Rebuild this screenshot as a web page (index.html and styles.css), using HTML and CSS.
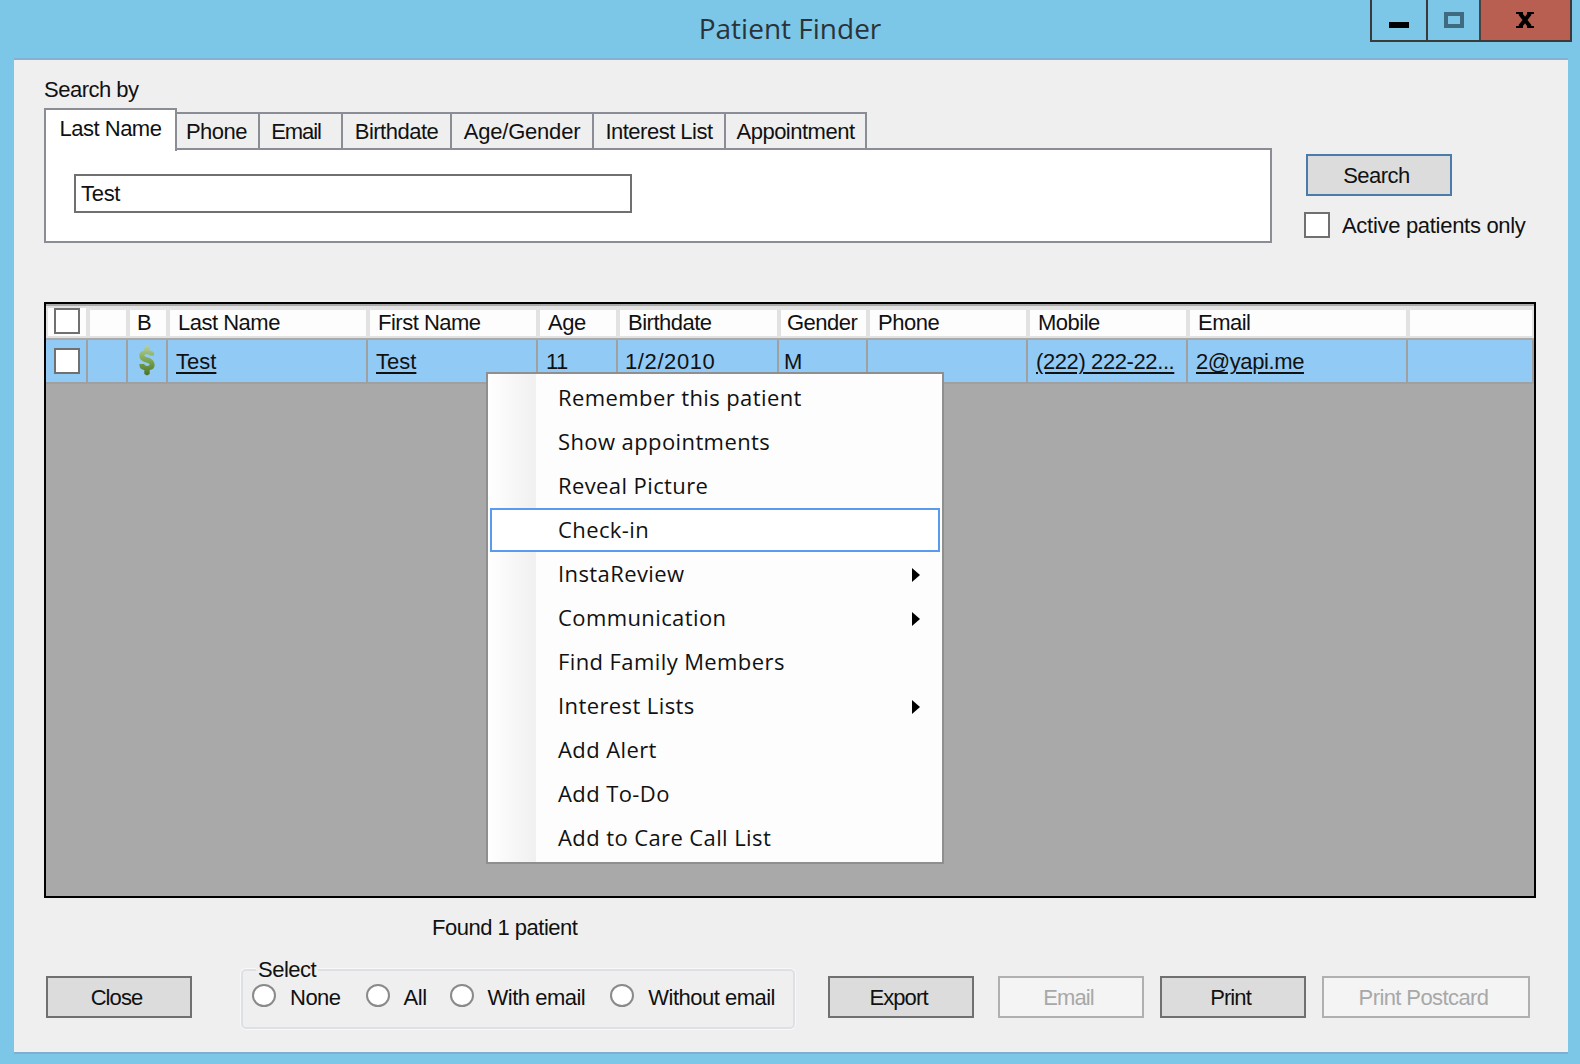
FILE: index.html
```html
<!DOCTYPE html>
<html lang="en">
<head>
    <meta charset="UTF-8">
    <title>Patient Finder</title>
    <link rel="stylesheet" href="styles.css">
</head>
<body>
    <div class="titlebar">
        <div></div>
        <div class="title">Patient Finder</div>
        <div class="controls">
            <div class="ctl ctl-min"><span class="min-bar"></span></div>
            <div class="ctl ctl-max"><span class="max-box"></span></div>
            <div class="ctl ctl-close">
                <svg width="18" height="16" viewBox="0 0 18 16">
                    <path d="M4 1.5 L14 14.5 M14 1.5 L4 14.5" stroke="#000" stroke-width="4" fill="none"/>
                    <path d="M0 0h7v2H0z M11 0h7v2h-7z M0 14h7v2H0z M11 14h7v2h-7z" fill="#000"/>
                </svg>
            </div>
        </div>
    </div>

    <div class="client">
        <div class="search-row">
            <div class="search-by">
                <div class="search-label">Search by</div>
                <div class="tabs">
                    <div class="tab active tab-last">Last Name</div>
                    <div class="tab tab-phone">Phone</div>
                    <div class="tab tab-email">Email</div>
                    <div class="tab tab-birth">Birthdate</div>
                    <div class="tab tab-age">Age/Gender</div>
                    <div class="tab tab-interest">Interest List</div>
                    <div class="tab tab-appt">Appointment</div>
                </div>
                <div class="tab-pane">
                    <div class="text-input">Test</div>
                </div>
            </div>
            <div class="search-side">
                <button class="btn btn-search">Search</button>
                <div class="active-only">
                    <span class="check"></span>
                    <span class="active-text">Active patients only</span>
                </div>
            </div>
        </div>

        <div class="grid">
            <div class="grid-cols grid-head">
                <div class="hcell"><span class="check"></span></div>
                <div class="hcell"></div>
                <div class="hcell hcell-b">B</div>
                <div class="hcell">Last Name</div>
                <div class="hcell">First Name</div>
                <div class="hcell">Age</div>
                <div class="hcell">Birthdate</div>
                <div class="hcell hcell-gender">Gender</div>
                <div class="hcell">Phone</div>
                <div class="hcell">Mobile</div>
                <div class="hcell">Email</div>
                <div class="hcell"></div>
            </div>
            <div class="grid-cols grid-row">
                <div class="cell"><span class="check"></span></div>
                <div class="cell"></div>
                <div class="cell cell-icon">
                    <svg width="18" height="32" viewBox="0 0 20 32" preserveAspectRatio="none">
                        <defs>
                            <linearGradient id="dollar" x1="0" y1="0" x2="0" y2="1">
                                <stop offset="0" stop-color="#b9d3a3"/>
                                <stop offset="0.5" stop-color="#7fa650"/>
                                <stop offset="1" stop-color="#4a7224"/>
                            </linearGradient>
                        </defs>
                        <path d="M10 0.5 L13 3.5 V6.5 C17 7 18 8.5 18 11.5 H13 C13 10 7 9.5 7 11.5 C7 13.5 18.5 13 18.5 21 C18.5 24 16.500 25.500 13 26 V30 L10 31.500 L7 30 V26 C3 25.500 1.500 23.500 1.500 20 H7 C7 22.500 13 22.500 13 20.500 C13 18 1.500 19 1.500 11.500 C1.500 8.500 3.500 7 7 6.500 V3.500 Z" fill="url(#dollar)"/>
                    </svg>
                </div>
                <div class="cell"><a class="link link-name">Test</a></div>
                <div class="cell"><a class="link link-name">Test</a></div>
                <div class="cell">11</div>
                <div class="cell cell-date">1/2/2010</div>
                <div class="cell cell-gender">M</div>
                <div class="cell"></div>
                <div class="cell"><a class="link">(222) 222-22...</a></div>
                <div class="cell"><a class="link">2@yapi.me</a></div>
                <div class="cell"></div>
            </div>

            <div class="menu">
                <div class="menu-item">Remember this patient</div>
                <div class="menu-item">Show appointments</div>
                <div class="menu-item">Reveal Picture</div>
                <div class="menu-item selected">Check-in</div>
                <div class="menu-item">InstaReview<span class="arrow"></span></div>
                <div class="menu-item">Communication<span class="arrow"></span></div>
                <div class="menu-item">Find Family Members</div>
                <div class="menu-item">Interest Lists<span class="arrow"></span></div>
                <div class="menu-item">Add Alert</div>
                <div class="menu-item">Add To-Do</div>
                <div class="menu-item">Add to Care Call List</div>
            </div>
        </div>

        <div class="found">Found 1 patient</div>

        <div class="bottom-bar">
            <button class="btn btn-close">Close</button>
            <div class="select-group">
                <span class="select-legend">Select</span>
                <div class="radio-opt opt-none"><span class="radio"></span>None</div>
                <div class="radio-opt opt-all"><span class="radio"></span>All</div>
                <div class="radio-opt opt-with"><span class="radio"></span>With email</div>
                <div class="radio-opt"><span class="radio"></span>Without email</div>
            </div>
            <button class="btn btn-export">Export</button>
            <button class="btn btn-email" disabled>Email</button>
            <button class="btn btn-print">Print</button>
            <button class="btn btn-postcard" disabled>Print Postcard</button>
        </div>
    </div>
</body>
</html>
```

FILE: styles.css
```css
* {
    box-sizing: border-box;
}
body {
    margin: 0;
    height: 1064px;
    background: #7cc7e8;
    font-family: "Liberation Sans", Arial, sans-serif;
    font-size: 22px;
    letter-spacing: -0.5px;
    color: #111;
    overflow: hidden;
}

/* title bar */
.titlebar {
    height: 58px;
    display: grid;
    grid-template-columns: 1fr auto 1fr;
}
.title {
    font-family: "Open Sans", sans-serif;
    font-size: 28px;
    line-height: 56px;
    letter-spacing: 0;
    color: #2b3338;
}
.controls {
    justify-self: end;
    display: flex;
    height: 42px;
    margin-right: 8px;
    border: 2px solid #3a3a3a;
    border-top: none;
}
.ctl {
    display: flex;
    align-items: center;
    justify-content: center;
}
.ctl-min {
    width: 56px;
    border-right: 2px solid #3a3a3a;
    padding-top: 10px;
}
.min-bar {
    width: 20px;
    height: 6px;
    background: #000;
}
.ctl-max {
    width: 51px;
}
.max-box {
    width: 20px;
    height: 16px;
    border: 4px solid #3f6a80;
}
.ctl-close {
    width: 91px;
    padding-right: 2px;
    background: #b85f52;
    border-left: 2px solid #4f4040;
}

/* main window area */
.client {
    height: 996px;
    margin: 0 12px 0 14px;
    padding: 17px 30px 0;
    background: #efefef;
    border-top: 2px solid #86b0d0;
    border-bottom: 2px solid #7db0cf;
}
.search-row {
    display: flex;
}
.search-by {
    width: 1228px;
}
.search-label {
    height: 26px;
    line-height: 26px;
    margin-bottom: 5px;
}
.tabs {
    display: flex;
    align-items: flex-end;
    height: 43px;
    position: relative;
    z-index: 1;
}
.tab {
    height: 36px;
    line-height: 35px;
    text-align: center;
    background: #efefef;
    border: 2px solid #8a8d96;
    border-left: none;
    border-bottom: none;
    margin-bottom: 3px;
}
.tab.active {
    height: 43px;
    line-height: 37px;
    background: #fff;
    border-left: 2px solid #8a8d96;
    margin-bottom: 0;
}
.tab-last { width: 133px; }
.tab-phone { width: 83px; padding-right: 2px; }
.tab-email { width: 83px; padding-right: 9px; letter-spacing: -1.1px; }
.tab-birth { width: 109px; }
.tab-age { width: 142px; letter-spacing: -0.2px; }
.tab-interest { width: 132px; }
.tab-appt { width: 141px; }
.tab-pane {
    height: 95px;
    margin-top: -3px;
    padding: 24px 28px 0;
    background: #fff;
    border: 2px solid #8a8d96;
}
.text-input {
    width: 558px;
    height: 39px;
    line-height: 36px;
    padding-left: 5px;
    letter-spacing: -0.3px;
    background: #fff;
    border: 2px solid #707070;
}
.search-side {
    margin-left: 34px;
    padding-top: 77px;
}
.active-only {
    display: flex;
    align-items: center;
    gap: 12px;
    margin: 15px 0 0 -2px;
}
.active-text {
    margin-top: 2px;
    letter-spacing: -0.3px;
}
.check {
    display: block;
    width: 26px;
    height: 26px;
    background: #fff;
    border: 2px solid #707070;
}

/* buttons */
.btn {
    display: block;
    width: 146px;
    height: 42px;
    padding: 2px 5px 0 0;
    font: inherit;
    letter-spacing: inherit;
    color: #111;
    background: #dcdcdc;
    border: 2px solid #707070;
}
.btn:disabled {
    color: #a8a8a8;
    background: #f4f4f4;
    border-color: #b0b0b0;
}
.btn-search {
    border-color: #4a7cab;
}

/* patient grid */
.grid {
    position: relative;
    width: 1492px;
    height: 596px;
    margin-top: 59px;
    padding-top: 2px;
    background: #a9a9a9;
    border: 2px solid #000;
}
.grid-cols {
    display: grid;
    grid-template-columns: 42px 40px 40px 200px 170px 80px 161px 89px 160px 160px 220px 126px;
}
.grid-head {
    height: 34px;
    border-bottom: 2px solid #a9a9a9;
}
.hcell {
    height: 32px;
    line-height: 26px;
    padding-left: 8px;
    overflow: hidden;
    white-space: nowrap;
    background: #fdfdfd;
    border-top: 4px solid #e2e2e2;
    border-bottom: 2px solid #e2e2e2;
    border-left: 2px solid #e2e2e2;
    border-right: 2px solid #e2e2e2;
}
.hcell:first-child {
    padding-left: 6px;
    border-top-width: 2px;
}
.hcell-b {
    text-align: center;
    padding-left: 0;
    padding-right: 8px;
}
.hcell-gender {
    padding-left: 6px;
}
.grid-row {
    height: 44px;
    background: #92caf6;
    border-bottom: 2px solid #a0a0a0;
}
.cell {
    line-height: 44px;
    padding-left: 8px;
    overflow: hidden;
    white-space: nowrap;
    border-right: 2px solid #a0a0a0;
}
.cell:first-child {
    padding-top: 8px;
}
.cell-icon {
    padding: 4px 0 0 10px;
}
.cell-icon svg {
    display: block;
}
.cell-date {
    padding-left: 7px;
    letter-spacing: 0.6px;
}
.cell-gender {
    padding-left: 5px;
}
.link {
    letter-spacing: -0.4px;
    text-decoration: underline;
    text-decoration-thickness: 2px;
    text-underline-offset: 3px;
}
.link-name {
    letter-spacing: 0;
}

/* context menu */
.menu {
    position: absolute;
    left: 440px;
    top: 68px;
    width: 458px;
    height: 492px;
    padding: 2px;
    background: linear-gradient(to right, #fff, #f0f0f0 48px, #fdfdfd 48px);
    border: 2px solid #8f8f8f;
}
.menu-item {
    position: relative;
    height: 44px;
    line-height: 39px;
    padding-left: 66px;
    font-family: "Open Sans", sans-serif;
    font-size: 22px;
    letter-spacing: 0.4px;
    color: #111;
    border: 2px solid transparent;
}
.menu-item.selected {
    background: #fff;
    border-color: #5a9bef;
}
.arrow {
    position: absolute;
    right: 18px;
    top: 14px;
    border-left: 8px solid #000;
    border-top: 7px solid transparent;
    border-bottom: 7px solid transparent;
}

/* bottom */
.found {
    height: 26px;
    line-height: 26px;
    margin: 17px 0 0 388px;
}
.bottom-bar {
    display: flex;
    align-items: flex-start;
    margin-top: 28px;
    padding-left: 2px;
}
.bottom-bar .btn {
    margin-top: 7px;
    letter-spacing: -0.9px;
}
.select-group {
    position: relative;
    display: flex;
    width: 554px;
    height: 60px;
    margin: 0 33px 0 49px;
    padding: 12px 0 0 9px;
    border: 2px solid #dde1e6;
    border-radius: 5px;
    box-shadow: 0 0 0 1px #f8f8f8;
}
.select-legend {
    position: absolute;
    left: 13px;
    top: -13px;
    padding: 0 2px;
    line-height: 24px;
    background: #efefef;
}
.radio-opt {
    display: flex;
    align-items: center;
    gap: 14px;
    height: 26px;
    padding-top: 4px;
}
.radio {
    width: 24px;
    height: 23px;
    margin-bottom: 6px;
    background: #fff;
    border: 2px solid #8a8a8a;
    border-radius: 50%;
}
.opt-none { margin-right: 25px; }
.opt-all { margin-right: 23px; }
.opt-with { margin-right: 25px; }
.btn-email { margin-left: 24px; }
.btn-print { margin-left: 16px; }
.bottom-bar .btn-postcard {
    margin-left: 16px;
    width: 208px;
    letter-spacing: -0.6px;
}
```
